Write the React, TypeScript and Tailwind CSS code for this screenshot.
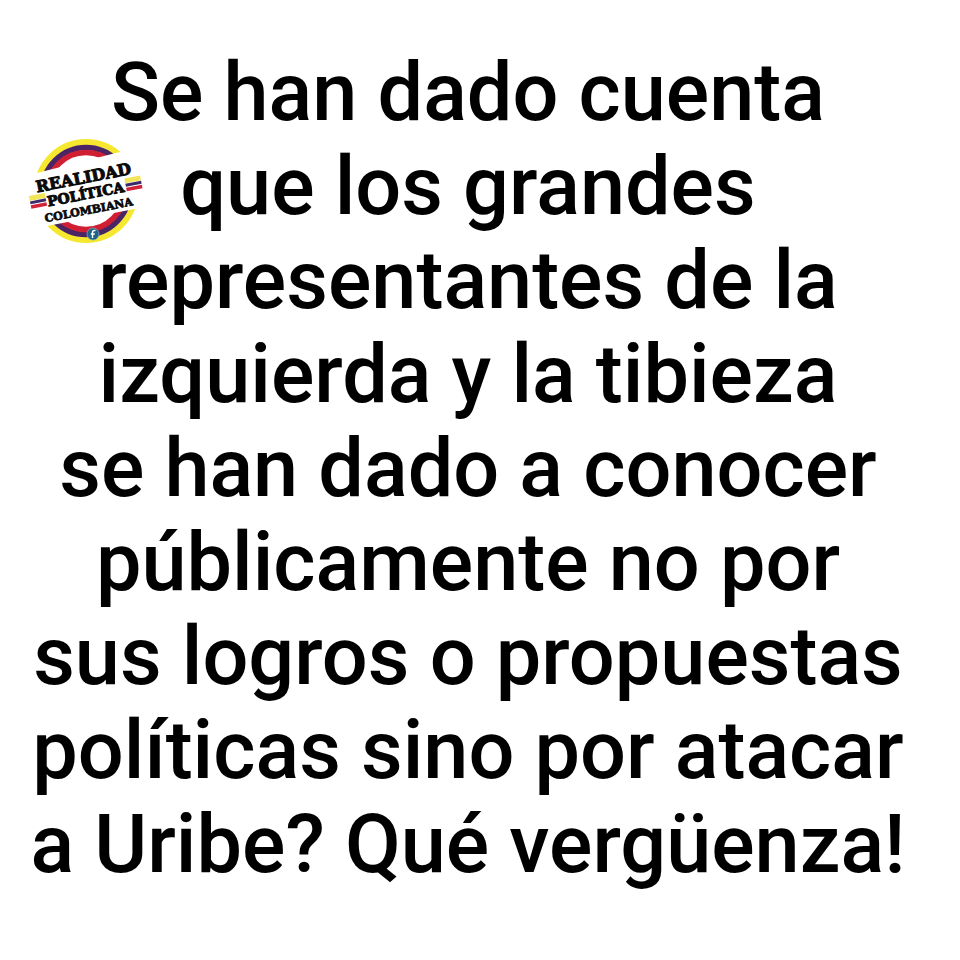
const lines = [
  "Se han dado cuenta",
  "que los grandes",
  "representantes de la",
  "izquierda y la tibieza",
  "se han dado a conocer",
  "públicamente no por",
  "sus logros o propuestas",
  "políticas sino por atacar",
  "a Uribe? Qué vergüenza!",
];

function Flag({ x, y }: { x: number; y: number }) {
  return (
    <g transform={`translate(${x} ${y})`}>
      <rect width="16" height="5" fill="#f3e55a" />
      <rect y="5.5" width="16" height="3" fill="#3c2a6e" />
      <rect y="9.5" width="16" height="3.5" fill="#d0233a" />
    </g>
  );
}

function Badge() {
  return (
    <svg
      className="absolute left-[26px] top-[136px] h-[110px] w-[120px]"
      viewBox="0 0 120 110"
      role="img"
      aria-label="Realidad Política Colombiana"
    >
      <circle cx="60" cy="55" r="49" fill="none" stroke="#f6e72f" strokeWidth="6" />
      <circle cx="60" cy="55" r="43.5" fill="none" stroke="#4a2463" strokeWidth="5.4" />
      <circle cx="60" cy="55" r="38.5" fill="none" stroke="#d01f33" strokeWidth="5.4" />
      <g transform="translate(60 55) rotate(-11)">
        <polygon points="-62,-26 62,-33 62,27 -62,27" fill="#fff" />
        <Flag x={-57} y={-6} />
        <Flag x={40} y={-5} />
        <g
          fontFamily="'DejaVu Serif', serif"
          fontWeight="700"
          textAnchor="middle"
          fill="#0a0a0a"
          stroke="#0a0a0a"
          strokeWidth="1"
          strokeLinejoin="round"
        >
          <text x="0" y="-8" fontSize="16">REALIDAD</text>
          <text x="-1" y="8" fontSize="14">POLÍTICA</text>
          <text x="-1" y="23" fontSize="11" strokeWidth="0.7">COLOMBIANA</text>
        </g>
      </g>
      <circle cx="67" cy="98" r="6" fill="#1f6287" stroke="#7fa9bb" strokeWidth="0.8" />
      <path
        d="M69.5 94.5h-1.2c-1.3 0-1.8.7-1.8 1.8v5.6M64.8 98h4"
        fill="none"
        stroke="#fff"
        strokeWidth="1.5"
      />
    </svg>
  );
}

export default function App() {
  return (
    <main className="relative min-h-screen bg-white pt-[46px] pr-6">
      <h1 className="text-center font-['Roboto',sans-serif] text-[81px] leading-[94px] font-medium text-black">
        {lines.map((line) => (
          <span key={line} className="block whitespace-nowrap">
            {line}
          </span>
        ))}
      </h1>
      <Badge />
    </main>
  );
}
